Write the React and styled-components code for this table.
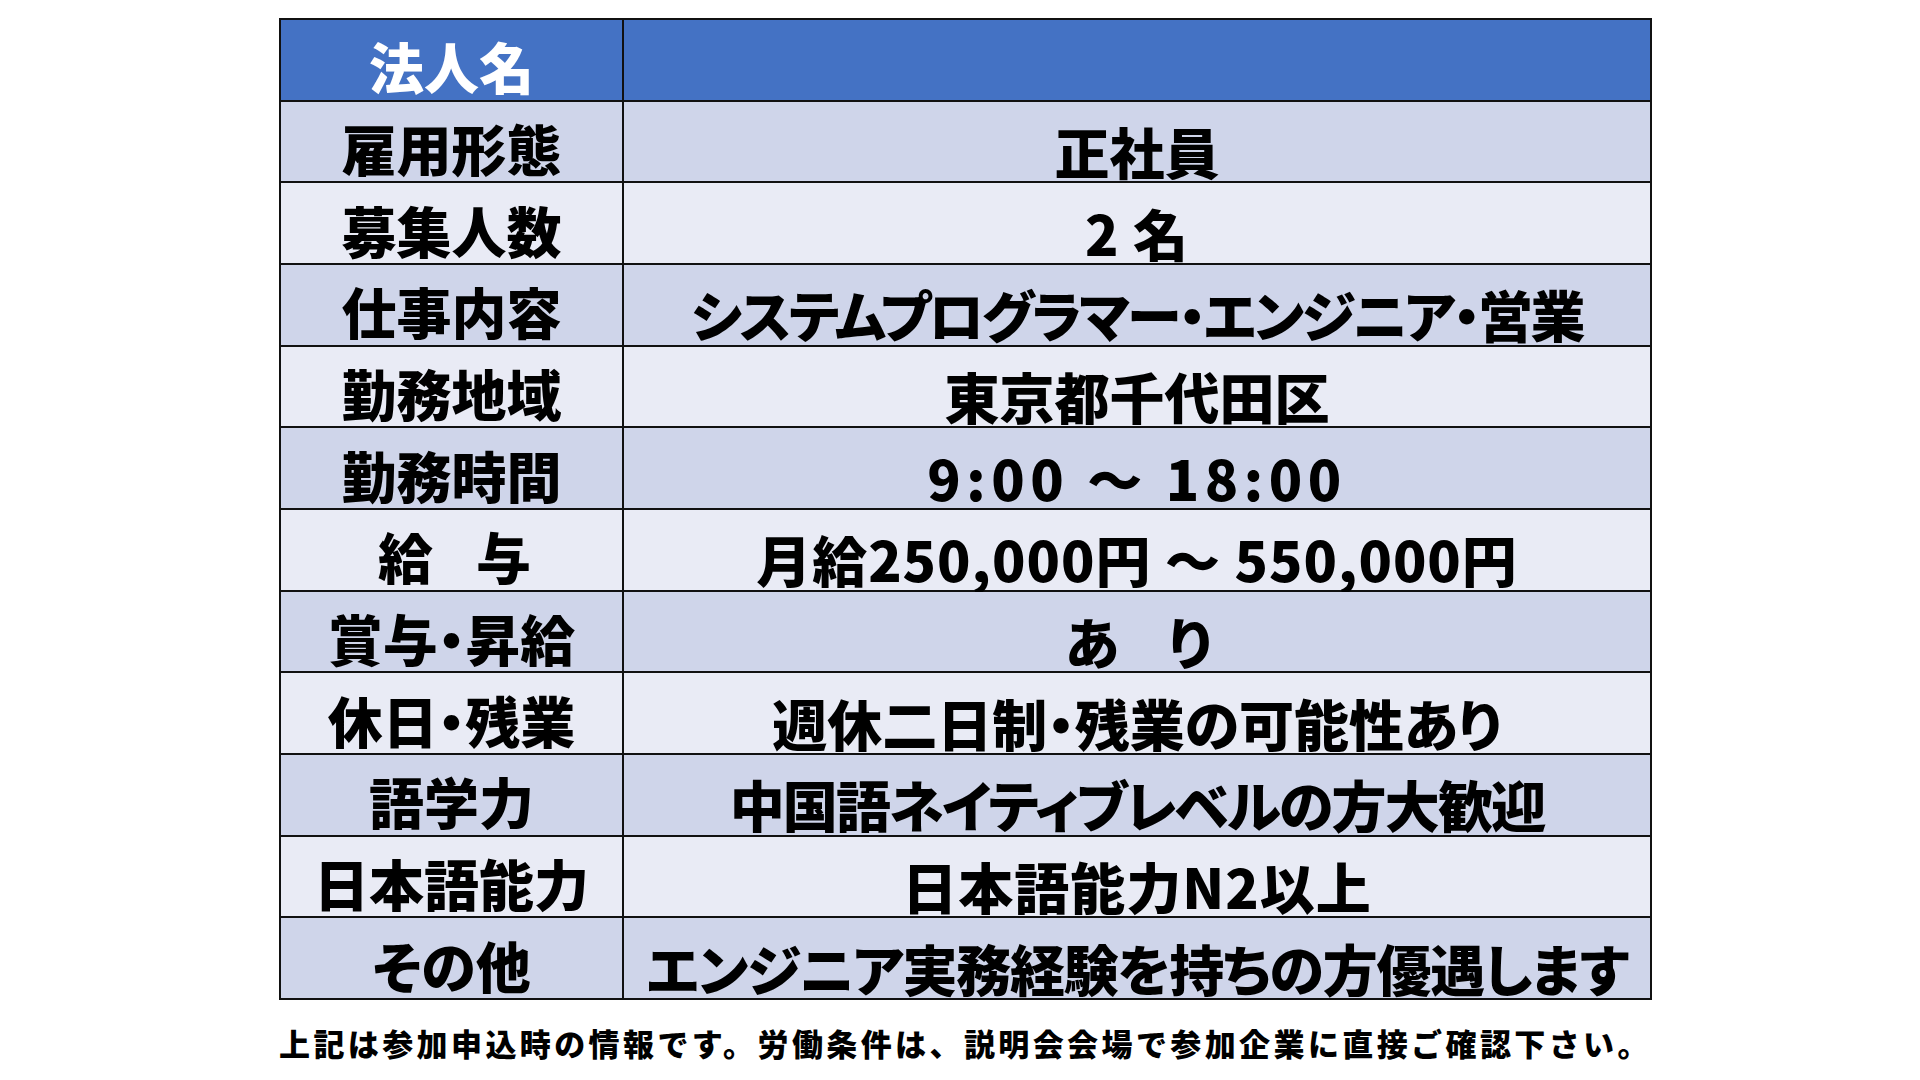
import * as React from 'react';
import styled, { createGlobalStyle } from 'styled-components';

const GlobalStyle = createGlobalStyle`
  html, body {
    margin: 0;
    padding: 0;
    background: #ffffff;
  }
  body {
    width: 1920px;
    height: 1080px;
    overflow: hidden;
    font-family: "Noto Sans CJK JP", "Noto Sans", sans-serif;
  }
`

const Page = styled.div`
  display: flex;
  flex-direction: column;
  align-items: flex-start;
  padding-top: 18px;
  padding-left: 279px;
`

const Table = styled.div`
  display: grid;
  grid-template-columns: 341px 1026px;
  grid-template-rows: repeat(12, 1fr);
  gap: 2px;
  padding: 2px;
  height: 978px;
  background: #111111;
`

const Cell = styled.div`
  display: flex;
  align-items: center;
  justify-content: center;
  padding-top: ${props => props.shift}px;
  background: ${props => props.bg};
  color: ${props => props.color || '#000000'};
  font-size: 55px;
  font-weight: 900;
  line-height: 1;
  white-space: nowrap;
  font-feature-settings: "palt" 1;
  letter-spacing: ${props => props.spacing || 0}px;
`

const Note = styled.p`
  margin: 27px 0 0 0;
  font-size: 31px;
  font-weight: 900;
  line-height: 1;
  letter-spacing: 3.4px;
  color: #000000;
  white-space: nowrap;
`

// [label, value, label spacing, value spacing]
const rows = [
  ['雇用形態', '正社員', 0, 0],
  ['募集人数', '2 名', 0, 1],
  ['仕事内容', 'システムプログラマー・エンジニア・営業', 0, -2.5],
  ['勤務地域', '東京都千代田区', 0, 0],
  ['勤務時間', '9:00 ～ 18:00', 0, 5.5],
  ['給　与', '月給250,000円 ～ 550,000円', -6, 1],
  ['賞与・昇給', 'あ　り', 0, -3],
  ['休日・残業', '週休二日制・残業の可能性あり', 0, 0],
  ['語学力', '中国語ネイティブレベルの方大歓迎', 0, -1.8],
  ['日本語能力', '日本語能力N2以上', 0, 1],
  ['その他', 'エンジニア実務経験を持ちの方優遇します', 0, -1.2],
]

const App = () => {
  return <>
    <GlobalStyle />
    <Page>
      <Table>
        <Cell bg="#4472C4" color="#ffffff" shift={12}>法人名</Cell>
        <Cell bg="#4472C4" />
        {rows.map(([label, value, labelSpacing, valueSpacing], i) => {
          const bg = i % 2 === 0 ? '#CFD5EA' : '#E9EBF5';
          return <React.Fragment key={label}>
            <Cell bg={bg} shift={12} spacing={labelSpacing}>{label}</Cell>
            <Cell bg={bg} shift={18} spacing={valueSpacing}>{value}</Cell>
          </React.Fragment>
        })}
      </Table>
      <Note>上記は参加申込時の情報です。労働条件は、説明会会場で参加企業に直接ご確認下さい。</Note>
    </Page>
  </>
}

export default App;
